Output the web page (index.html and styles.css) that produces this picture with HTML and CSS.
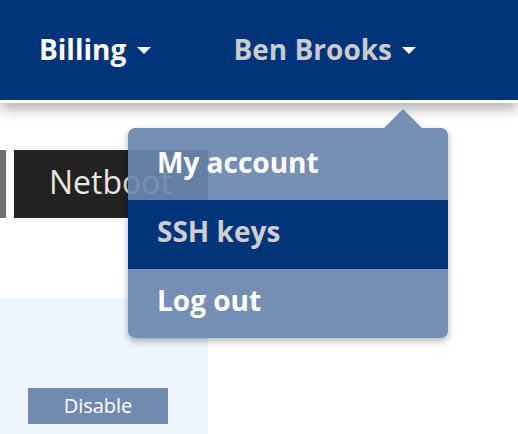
FILE: index.html
```html
<!DOCTYPE html>
<html lang="en">
<head>
	<meta charset="UTF-8">
	<title>Account menu</title>
	<link rel="stylesheet" href="styles.css">
</head>
<body>
<header class="topbar">
	<nav class="nav">
		<div class="nav-item">Billing <span class="caret"></span></div>
		<div class="nav-item nav-item--user">Ben Brooks <span class="caret"></span>
			<ul class="dropdown">
				<li class="dropdown-item">My account</li>
				<li class="dropdown-item dropdown-item--active">SSH keys</li>
				<li class="dropdown-item">Log out</li>
			</ul>
		</div>
	</nav>
</header>

<main class="content">
	<div class="tabs">
		<div class="tab tab--prev"></div>
		<div class="tab tab--current">Netboot</div>
	</div>
	<div class="panel">
		<button class="btn-disable">Disable</button>
	</div>
</main>
</body>
</html>
```

FILE: styles.css
```css
html, body { margin: 0; padding: 0; background: #fff; }
body { font-family: "Open Sans", "Liberation Sans", sans-serif; height: 434px; overflow: hidden; }

.topbar {
  position: relative;
  z-index: 2;
  height: 100px;
  background: #003478;
  border-bottom: 3px solid #fff;
  box-shadow: 0 6px 12px rgba(0,0,0,.3);
}
.nav { display: flex; padding: 30px 0 0 39px; gap: 83px; }
.nav-item { font-size: 28px; font-weight: 700; line-height: 38px; color: #fff; white-space: nowrap; }
.nav-item--user { color: #c9cbd0; }
.caret {
  display: inline-block;
  vertical-align: middle;
  margin-left: 3px;
  margin-top: -4px;
  border-left: 7.5px solid transparent;
  border-right: 7.5px solid transparent;
  border-top: 7px solid #fff;
}

/* menu is slightly see-through, the tab behind shows a little */
.dropdown {
  position: absolute;
  left: 128px;
  top: 128px;
  width: 320px;
  margin: 0;
  padding: 3px 0 0;
  list-style: none;
  background: rgba(108,136,175,.93);
  border-radius: 7px;
  box-shadow: 0 3px 7px rgba(0,0,0,.3);
}
.dropdown::before {
  content: "";
  position: absolute;
  top: -19px;
  left: 256px;
  border-left: 19px solid transparent;
  border-right: 19px solid transparent;
  border-bottom: 19px solid #7690b5;
}
.dropdown-item {
  height: 69px;
  padding: 12px 0 0 29px;
  box-sizing: border-box;
  line-height: 38px;
  color: #fff;
}
.dropdown-item--active { background: #003478; color: #cdcfd4; }

.content { padding-top: 47px; }
.tabs { display: flex; gap: 8px; height: 68px; }
.tab--prev { width: 6px; background: #707070; }
.tab--current {
  width: 194px;
  box-sizing: border-box;
  padding-left: 35px;
  background: #222;
  color: #e6e6e6;
  font-size: 32px;
  line-height: 64px;
}

.panel {
  width: 208px;
  height: 140px;
  margin-top: 80px;
  padding: 90px 0 0 28px;
  box-sizing: border-box;
  background: #eef5fd;
}
.btn-disable {
  width: 140px;
  height: 36px;
  padding: 0;
  border: 0;
  background: #718ab0;
  color: #fff;
  font-family: inherit;
  font-size: 20px;
  line-height: 36px;
}
```
